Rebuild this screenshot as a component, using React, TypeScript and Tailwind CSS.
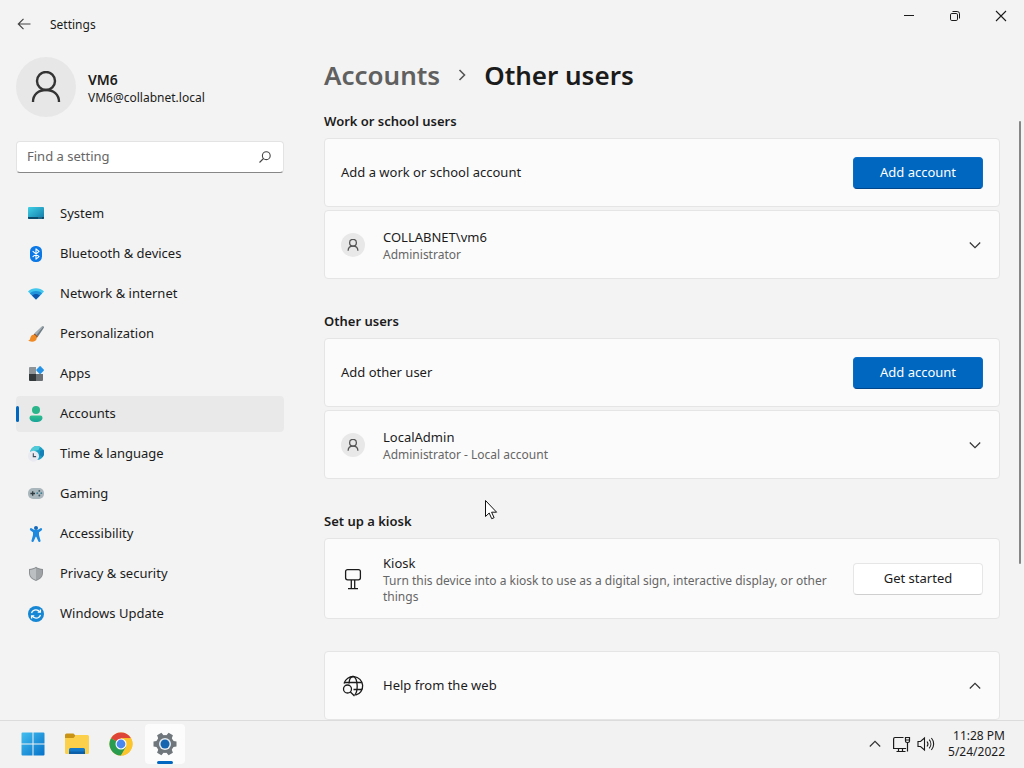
import type { ReactNode } from "react";

type NavItem = {
  id: string;
  label: string;
  icon: ReactNode;
};

const navItems: NavItem[] = [
  { id: "system", label: "System", icon: <SystemIcon /> },
  { id: "bluetooth", label: "Bluetooth & devices", icon: <BluetoothIcon /> },
  { id: "network", label: "Network & internet", icon: <NetworkIcon /> },
  { id: "personalization", label: "Personalization", icon: <BrushIcon /> },
  { id: "apps", label: "Apps", icon: <AppsIcon /> },
  { id: "accounts", label: "Accounts", icon: <AccountsIcon /> },
  { id: "time", label: "Time & language", icon: <TimeIcon /> },
  { id: "gaming", label: "Gaming", icon: <GamingIcon /> },
  { id: "accessibility", label: "Accessibility", icon: <AccessibilityIcon /> },
  { id: "privacy", label: "Privacy & security", icon: <ShieldIcon /> },
  { id: "update", label: "Windows Update", icon: <UpdateIcon /> },
];

function SystemIcon() {
  return (
    <svg viewBox="0 0 16 16" className="size-4" aria-hidden>
      <defs>
        <linearGradient id="sys" x1="0" y1="0" x2="1" y2="1">
          <stop offset="0" stopColor="#3fd0e6" />
          <stop offset="1" stopColor="#1279a8" />
        </linearGradient>
      </defs>
      <rect y="1" width="16" height="12" rx="1" fill="url(#sys)" />
      <path d="M0 11h16v1a1 1 0 0 1-1 1H1a1 1 0 0 1-1-1z" fill="#0b4a6b" />
      <path d="M10.500 12h1M12.500 12h1" stroke="#7fd8f0" strokeWidth=".8" />
    </svg>
  );
}

function BluetoothIcon() {
  return (
    <svg viewBox="0 0 16 16" className="size-4" aria-hidden>
      <rect x="2" width="12" height="16" rx="5.500" fill="#0a78e6" />
      <path
        d="M5 5.300l6 5.300-3 2.600V2.800l3 2.600-6 5.300"
        fill="none"
        stroke="#fff"
        strokeWidth="1.100"
        strokeLinejoin="round"
        strokeLinecap="round"
      />
    </svg>
  );
}

function NetworkIcon() {
  return (
    <svg viewBox="0 0 16 16" className="size-4" aria-hidden>
      <path d="M0 5.500C2.200 3.300 5 2.300 8 2.300s5.800 1 8 3.200L8 13.500z" fill="#41c6ee" />
      <path d="M1.900 7.400C3.700 5.700 5.700 5 8 5s4.300.7 6.100 2.400L8 13.500z" fill="#1e93dc" />
      <path d="M4 9.500C5.100 8.400 6.500 7.900 8 7.900s2.900.5 4 1.600l-4 4z" fill="#0c57ad" />
    </svg>
  );
}

function BrushIcon() {
  return (
    <svg viewBox="0 0 16 16" className="size-4" aria-hidden>
      <path d="M14 .5c1.200-.8 2.400.4 1.700 1.600L10 10.600 6.600 7.600z" fill="#6d7a83" />
      <path d="M14 .5c.5-.3 1-.3 1.400 0L8.300 9.200 6.600 7.600z" fill="#a3afb6" />
      <path d="M6.600 7.600l3.400 3-1.300 1.400-3.200-2.900z" fill="#8f4b1b" />
      <path
        d="M5.500 8.700c1.700 0 3.300 1.400 3.300 3.100 0 2.400-2.100 4-4.800 4-1.500 0-3-.5-3.800-1.200 1.200-.2 1.700-.8 2-2.300.4-2.100 1.500-3.600 3.300-3.600z"
        fill="#f08a24"
      />
    </svg>
  );
}

function AppsIcon() {
  return (
    <svg viewBox="0 0 16 16" className="size-4" aria-hidden>
      <path d="M1 2a1 1 0 0 1 1-1h6v7H1z" fill="#8d9396" />
      <path d="M1 8h7v7H2a1 1 0 0 1-1-1z" fill="#34393c" />
      <path d="M8 8h7v6a1 1 0 0 1-1 1H8z" fill="#6a7073" />
      <path
        d="M11.400.4a1 1 0 0 1 1.400 0l2.900 3a1 1 0 0 1 0 1.300l-2.900 3a1 1 0 0 1-1.400 0l-2.900-3a1 1 0 0 1 0-1.300z"
        fill="#2492e6"
      />
    </svg>
  );
}

function AccountsIcon() {
  return (
    <svg viewBox="0 0 16 16" className="size-4" aria-hidden>
      <defs>
        <linearGradient id="acc" x1="0" y1="0" x2="0" y2="1">
          <stop offset="0" stopColor="#2fc08d" />
          <stop offset="1" stopColor="#17a398" />
        </linearGradient>
      </defs>
      <circle cx="8" cy="4" r="4" fill="#2bb58a" />
      <path
        d="M3.800 9.500h8.400a2.200 2.200 0 0 1 2.300 2.200C14.500 14.500 11.700 16 8 16s-6.500-1.500-6.500-4.300a2.200 2.200 0 0 1 2.300-2.200z"
        fill="url(#acc)"
      />
    </svg>
  );
}

function TimeIcon() {
  return (
    <svg viewBox="0 0 16 16" className="size-4" aria-hidden>
      <circle cx="9" cy="7" r="7" fill="#1c9fc4" />
      <path d="M4 2.200A7 7 0 0 1 12 .7L10.500 4 6 5 2.200 6A7 7 0 0 1 4 2.200z" fill="#52cbd8" />
      <path d="M12 5l3.500-1.500A7 7 0 0 1 14.600 11L11.500 9z" fill="#1580b8" />
      <circle cx="5.500" cy="10.200" r="5.500" fill="#e9eaf1" />
      <path d="M5.300 7.300v3.300h2.800" fill="none" stroke="#3f4c5c" strokeWidth="1.100" />
    </svg>
  );
}

function GamingIcon() {
  return (
    <svg viewBox="0 0 16 16" className="size-4" aria-hidden>
      <rect y="2" width="16" height="11" rx="5" fill="#a9b6bb" />
      <path d="M4.700 5.200v4.600M2.400 7.500H7" stroke="#2f3a40" strokeWidth="1.300" />
      <circle cx="11.300" cy="4.900" r=".9" fill="#3a5560" />
      <circle cx="9.300" cy="7.200" r=".9" fill="#3a7f94" />
      <circle cx="13.300" cy="7.200" r=".9" fill="#3a7f94" />
      <circle cx="11.300" cy="9.500" r=".9" fill="#3a5560" />
    </svg>
  );
}

function AccessibilityIcon() {
  return (
    <svg viewBox="0 0 16 16" className="size-4" aria-hidden>
      <circle cx="8" cy="2" r="2" fill="#1667b8" />
      <path
        d="M2 2.800a1.200 1.200 0 0 1 1.600-.6L6 3.700h4l2.400-1.500a1.200 1.200 0 0 1 1.600.6c.3.600.1 1.200-.5 1.600L11 6.200V9l1.500 5.400a1.200 1.200 0 0 1-.8 1.500 1.200 1.200 0 0 1-1.500-.8L8.300 10.800h-.6l-1.900 4.300a1.200 1.200 0 0 1-1.500.8 1.200 1.200 0 0 1-.8-1.500L5 9V6.200L2.500 4.400C1.900 4 1.700 3.400 2 2.800z"
        fill="#1d8ae0"
      />
    </svg>
  );
}

function ShieldIcon() {
  return (
    <svg viewBox="0 0 16 16" className="size-4" aria-hidden>
      <path d="M8 .8c2 1.400 4.200 2.100 7 2.200V7c0 3.800-2.500 6.300-7 8-4.500-1.700-7-4.200-7-8V3C3.800 2.900 6 2.200 8 .8z" fill="#8b8f92" />
      <path d="M8 2c1.800 1.200 3.700 1.800 6 2v3.200c0 3.100-2 5.200-6 6.700z" fill="#9fa3a5" />
      <path d="M8 2C6.200 3.200 4.300 3.800 2 4v3.200c0 3.100 2 5.200 6 6.700z" fill="#bcbfc1" />
    </svg>
  );
}

function UpdateIcon() {
  return (
    <svg viewBox="0 0 16 16" className="size-4" aria-hidden>
      <circle cx="8" cy="8" r="8" fill="#1587d4" />
      <g fill="none" stroke="#fff" strokeWidth="1.300">
        <path d="M3.600 7.200C4.200 5 5.900 3.900 8 3.900c1.600 0 2.900.7 3.800 1.900" />
        <path d="M12.400 3.500v2.700H9.700" />
        <path d="M12.400 8.800c-.6 2.200-2.300 3.300-4.400 3.300-1.600 0-2.900-.7-3.800-1.900" />
        <path d="M3.600 12.500V9.800h2.700" />
      </g>
    </svg>
  );
}

function PersonIcon({ className, strokeWidth }: { className: string; strokeWidth: number }) {
  return (
    <svg
      viewBox="0 0 32 32"
      className={className}
      fill="none"
      stroke="currentColor"
      strokeWidth={strokeWidth}
      aria-hidden
    >
      <circle cx="16" cy="10" r="9" />
      <path d="M3 31c0-7.500 5.500-12 13-12s13 4.500 13 12" />
    </svg>
  );
}

function Chevron({ up = false }: { up?: boolean }) {
  return (
    <svg viewBox="0 0 12 12" className="size-3" fill="none" stroke="#333" strokeWidth="1.200" aria-hidden>
      <path d={up ? "M.8 8.500L6 3.300l5.200 5.200" : "M.8 3.500L6 8.700l5.200-5.200"} />
    </svg>
  );
}

function KioskIcon() {
  return (
    <svg viewBox="0 0 24 24" className="size-6" fill="none" stroke="#1b1b1b" strokeWidth="1.300" aria-hidden>
      <rect x="4.600" y="2.600" width="14.800" height="10.200" rx="2" />
      <path d="M10.300 13v8.500M13.700 13v8.500M7 21.700h10" />
    </svg>
  );
}

function GlobeSearchIcon() {
  return (
    <svg viewBox="0 0 24 24" className="size-6" fill="none" stroke="#1b1b1b" strokeWidth="1.300" aria-hidden>
      <path d="M3 9.500A9.500 9.500 0 1 1 14.500 21.200" />
      <path d="M3.200 8.500h17.600M12.500 15.500h8.600" />
      <path d="M8 9.500C8.300 5 10 2.500 12 2.500c2.400 0 4.200 4 4.200 9.500 0 4-1 7.500-2.500 9" />
      <circle cx="6.500" cy="15" r="4" />
      <path d="M9.400 18l4.100 4" />
    </svg>
  );
}

function Card({ tall = false, children }: { tall?: boolean; children: ReactNode }) {
  return (
    <div
      className={`flex items-center rounded border border-[#e5e5e5] bg-[#fbfbfb] px-4 ${
        tall ? "min-h-[81px]" : "min-h-[69px]"
      }`}
    >
      {children}
    </div>
  );
}

function AddAccountCard({ label }: { label: string }) {
  return (
    <Card>
      <p className="flex-1">{label}</p>
      <button
        type="button"
        className="h-8 w-[130px] rounded border border-[#0a6cc7] border-b-[#00468a] bg-[#0067c0] text-white"
      >
        Add account
      </button>
    </Card>
  );
}

function UserCard({ name, role }: { name: string; role: string }) {
  return (
    <Card>
      <button type="button" className="flex flex-1 items-center pr-[2px] text-left">
        <span className="mr-[18px] flex size-6 items-center justify-center rounded-full bg-[#e8e8e8] text-[#555]">
          <PersonIcon className="size-3" strokeWidth={3.5} />
        </span>
        <span className="flex flex-1 flex-col">
          <span className="leading-5">{name}</span>
          <span className="text-xs leading-4 text-[#666]">{role}</span>
        </span>
        <Chevron />
      </button>
    </Card>
  );
}

function Section({ title, children }: { title: string; children: ReactNode }) {
  return (
    <section>
      <h2 className="mb-[7px] leading-5 font-semibold">{title}</h2>
      <div className="flex flex-col gap-[3px]">{children}</div>
    </section>
  );
}

function TitleBar() {
  return (
    <header className="flex h-12 items-start justify-between">
      <div className="flex h-12 items-center">
        <button type="button" aria-label="Back" className="flex h-8 w-12 items-center justify-center">
          <svg viewBox="0 0 14 14" className="size-[14px]" fill="none" stroke="#444" strokeWidth="1.200" aria-hidden>
            <path d="M13.500 7H1.500M6.500 1.800L1.300 7l5.200 5.200" />
          </svg>
        </button>
        <span className="pt-[2px] pl-[2px] text-xs">Settings</span>
      </div>
      <div className="flex h-8">
        <button type="button" aria-label="Minimize" className="flex w-[46px] items-center justify-center">
          <svg viewBox="0 0 12 12" className="size-3" stroke="#1b1b1b" aria-hidden>
            <path d="M1 5.500h10" />
          </svg>
        </button>
        <button type="button" aria-label="Restore" className="flex w-[46px] items-center justify-center">
          <svg viewBox="0 0 12 12" className="size-3" fill="none" stroke="#1b1b1b" aria-hidden>
            <rect x="1.500" y="3.500" width="7" height="7" rx="1.300" />
            <path d="M3.500 1.500h4.700a2.300 2.300 0 0 1 2.300 2.300v4.700" />
          </svg>
        </button>
        <button type="button" aria-label="Close" className="flex w-[46px] items-center justify-center">
          <svg viewBox="0 0 12 12" className="size-3" stroke="#1b1b1b" strokeWidth="1.100" aria-hidden>
            <path d="M1 1l10 10M11 1L1 11" />
          </svg>
        </button>
      </div>
    </header>
  );
}

function Sidebar() {
  return (
    <aside className="w-[300px] shrink-0 px-4 pt-[9px]">
      <div className="flex items-center gap-3">
        <div className="flex size-[60px] items-center justify-center rounded-full bg-[#e7e7e7] text-[#333]">
          <PersonIcon className="size-8" strokeWidth={2.4} />
        </div>
        <div className="pt-[2px]">
          <p className="text-sm leading-5 font-semibold">VM6</p>
          <p className="text-xs leading-4">VM6@collabnet.local</p>
        </div>
      </div>
      <div className="mt-6 flex h-8 items-center rounded border border-[#e3e3e3] border-b-[#868686] bg-white pr-3 pl-[10px]">
        <input
          type="search"
          aria-label="Find a setting"
          placeholder="Find a setting"
          className="min-w-0 flex-1 bg-transparent outline-none placeholder:text-[#666]"
        />
        <svg viewBox="0 0 12 12" className="size-3" fill="none" stroke="#444" strokeWidth="1.100" aria-hidden>
          <circle cx="7.300" cy="4.700" r="3.900" />
          <path d="M4.500 7.500L.5 11.500" />
        </svg>
      </div>
      <nav className="mt-[23px] flex flex-col gap-1">
        {navItems.map((item) => (
          <a
            key={item.id}
            href={`#${item.id}`}
            aria-current={item.id === "accounts" ? "page" : undefined}
            className={`flex h-9 items-center rounded ${item.id === "accounts" ? "bg-[#e9e9e9]" : ""}`}
          >
            <span
              className={`mr-[9px] h-4 w-[3px] rounded-full ${item.id === "accounts" ? "bg-[#0067c0]" : ""}`}
            />
            {item.icon}
            <span className="pl-4">{item.label}</span>
          </a>
        ))}
      </nav>
    </aside>
  );
}

function TaskbarButton({ label, active = false, children }: { label: string; active?: boolean; children: ReactNode }) {
  return (
    <button
      type="button"
      aria-label={label}
      className={`relative flex size-10 items-center justify-center rounded ${active ? "bg-[#fcfcfc]" : ""}`}
    >
      {children}
      {active ? <span className="absolute bottom-0 h-[3px] w-4 rounded-full bg-[#0067c0]" /> : null}
    </button>
  );
}

function Taskbar() {
  return (
    <footer className="flex h-12 shrink-0 items-center justify-between border-t border-[#dcdcdc] bg-[#f2f2f2] pr-[19px] pb-[2px] pl-[13px]">
      <div className="flex gap-1">
        <TaskbarButton label="Start">
          <svg viewBox="0 0 24 24" className="size-6" aria-hidden>
            <defs>
              <linearGradient id="win" gradientUnits="userSpaceOnUse" x1="0" y1="0" x2="24" y2="24">
                <stop offset="0" stopColor="#45c0f0" />
                <stop offset="1" stopColor="#0470c8" />
              </linearGradient>
            </defs>
            <path
              d="M1.500.5h10v11H.5v-10a1 1 0 0 1 1-1zM12.500.5h10a1 1 0 0 1 1 1v10h-11zM.5 12.500h11v11h-10a1 1 0 0 1-1-1zM12.500 12.500h11v10a1 1 0 0 1-1 1h-10z"
              fill="url(#win)"
            />
          </svg>
        </TaskbarButton>
        <TaskbarButton label="File Explorer">
          <svg viewBox="0 0 24 24" className="size-6" aria-hidden>
            <path d="M0 3a1.500 1.500 0 0 1 1.500-1.500h7L11 4v5H0z" fill="#c99316" />
            <path
              d="M0 6h8.500l2.500-3h11.500A1.500 1.500 0 0 1 24 4.500v16a1.500 1.500 0 0 1-1.500 1.500h-21A1.500 1.500 0 0 1 0 20.500z"
              fill="#fcd04b"
            />
            <path d="M4 22v-4.500A1.500 1.500 0 0 1 5.500 16h13a1.500 1.500 0 0 1 1.500 1.500V22z" fill="#1579c9" />
            <path d="M4 19.500h16V22H4z" fill="#0d5fa8" />
          </svg>
        </TaskbarButton>
        <TaskbarButton label="Google Chrome">
          <svg viewBox="0 0 24 24" className="size-6" aria-hidden>
            <circle cx="12" cy="12" r="11.500" fill="#fbc52d" />
            <path d="M12 12L2.040 6.250A11.500 11.500 0 0 1 21.960 6.250H12z" fill="#de4437" />
            <path d="M2.040 6.250A11.500 11.500 0 0 0 12 23.500l5-8.600-5-2.900z" fill="#2a9c4f" />
            <path d="M12 6.250h9.960A11.500 11.500 0 0 1 12 23.500l5-8.600z" fill="#fbc52d" />
            <circle cx="12" cy="12" r="5.500" fill="#fff" />
            <circle cx="12" cy="12" r="4.400" fill="#4a87ee" />
          </svg>
        </TaskbarButton>
        <TaskbarButton label="Settings" active>
          <svg viewBox="0 0 24 24" className="size-6" aria-hidden>
            <g fill="#70777c">
              <circle cx="12" cy="12" r="9" />
              <path d="M9.500.5h5l.8 4.500H8.700zM9.500 23.500h5l.8-4.500H8.700z" transform="rotate(30 12 12)" />
              <path d="M9.500.5h5l.8 4.500H8.700zM9.500 23.500h5l.8-4.500H8.700z" transform="rotate(90 12 12)" />
              <path d="M9.500.5h5l.8 4.500H8.700zM9.500 23.500h5l.8-4.500H8.700z" transform="rotate(150 12 12)" />
            </g>
            <circle cx="12" cy="12" r="6" fill="#e8edf1" />
            <circle cx="12" cy="12" r="4.500" fill="#1565b0" />
          </svg>
        </TaskbarButton>
      </div>
      <div className="flex items-center">
        <button type="button" aria-label="Show hidden icons" className="mr-3">
          <Chevron up />
        </button>
        <button type="button" aria-label="Network and volume" className="mr-[13px] flex items-center gap-[6px]">
          <svg viewBox="0 0 18 18" className="size-[18px]" fill="none" stroke="#1b1b1b" strokeWidth="1.200" aria-hidden>
            <path d="M10.500 2.500H2A1.500 1.500 0 0 0 .6 4v9.500h12.500M5.500 13.500v3M9.500 13.500v3M3.500 16.500h9M14.500 7.500v9" />
            <path d="M12.500 2.500h4V6a1.500 1.500 0 0 1-1.500 1.500h-1A1.500 1.500 0 0 1 12.500 6zM12.500 5h4" />
          </svg>
          <svg viewBox="0 0 18 18" className="size-[18px]" fill="none" stroke="#1b1b1b" strokeWidth="1.100" aria-hidden>
            <path d="M1 6.500h2.500L7.500 3v12l-4-3.500H1zM10 6.500c1.200 1.500 1.200 3.500 0 5M12.200 4.700c2.200 2.500 2.200 6.100 0 8.600M14.400 3c3 3.500 3 8.500 0 12" />
          </svg>
        </button>
        <time dateTime="2022-05-24T23:28" className="text-right text-xs leading-4">
          11:28 PM
          <br />
          5/24/2022
        </time>
      </div>
    </footer>
  );
}

export default function App() {
  return (
    <div className="relative flex h-screen flex-col overflow-hidden bg-[#f3f3f3] font-['Noto_Sans','Open_Sans',sans-serif] text-[13px] text-[#1b1b1b]">
      <TitleBar />
      <div className="flex min-h-0 flex-1">
        <Sidebar />
        <main className="flex min-w-0 flex-1 flex-col overflow-hidden pt-[7px] pl-6">
          <h1 className="flex items-center text-[26px] leading-10 font-semibold">
            <a href="#accounts" className="text-[#606060]">
              Accounts
            </a>
            <svg viewBox="0 0 12 12" className="mx-4 size-3" fill="none" stroke="#555" strokeWidth="1.600" aria-hidden>
              <path d="M3.500 1l5 5-5 5" />
            </svg>
            <span>Other users</span>
          </h1>
          <div className="mt-4 flex min-h-0 flex-1">
            <div className="flex min-w-0 flex-1 flex-col gap-8">
              <Section title="Work or school users">
                <AddAccountCard label="Add a work or school account" />
                <UserCard name="COLLABNET\vm6" role="Administrator" />
              </Section>
              <Section title="Other users">
                <AddAccountCard label="Add other user" />
                <UserCard name="LocalAdmin" role="Administrator - Local account" />
              </Section>
              <Section title="Set up a kiosk">
                <Card tall>
                  <span className="mr-[18px]">
                    <KioskIcon />
                  </span>
                  <div className="flex-1 pr-4">
                    <p className="leading-5">Kiosk</p>
                    <p className="text-xs leading-4 text-[#666]">
                      Turn this device into a kiosk to use as a digital sign, interactive display, or other things
                    </p>
                  </div>
                  <button
                    type="button"
                    className="h-8 w-[130px] rounded border border-[#e6e6e6] border-b-[#cfcfcf] bg-white"
                  >
                    Get started
                  </button>
                </Card>
              </Section>
              <Card>
                <button type="button" aria-expanded className="flex flex-1 items-center pr-[2px] text-left">
                  <span className="mr-[18px]">
                    <GlobeSearchIcon />
                  </span>
                  <span className="flex-1">Help from the web</span>
                  <Chevron up />
                </button>
              </Card>
            </div>
            <div className="flex w-6 shrink-0 justify-end pt-[10px] pr-[3px]" aria-hidden>
              <div className="h-[74%] w-[2px] rounded-full bg-[#868686]" />
            </div>
          </div>
        </main>
      </div>
      <Taskbar />
      {/* mouse pointer */}
      <svg
        viewBox="0 0 13 20"
        className="pointer-events-none absolute top-[500px] left-[485px] h-5 w-[13px]"
        fill="#fff"
        stroke="#111"
        strokeLinejoin="round"
        aria-hidden
      >
        <path d="M.5.5v16l3.700-3.500 2.500 5.700 2.400-1-2.500-5.500h5z" />
      </svg>
    </div>
  );
}
